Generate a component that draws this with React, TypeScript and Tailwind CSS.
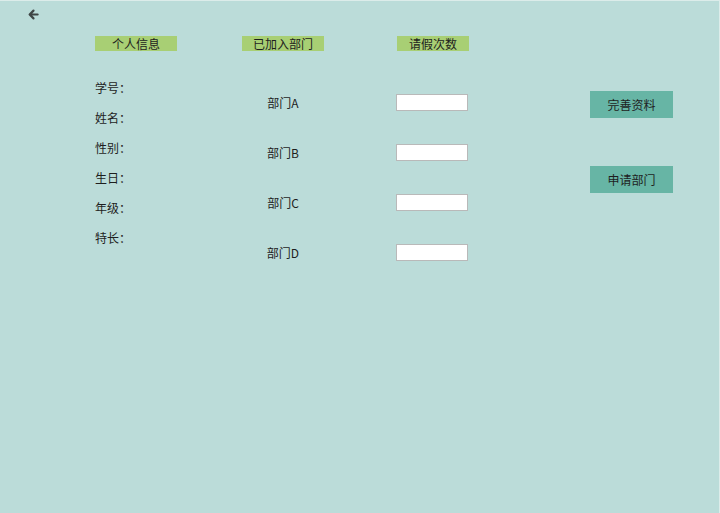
import React from 'react';

const labels = ['学号：', '姓名：', '性别：', '生日：', '年级：', '特长：'];
const depts = ['部门A', '部门B', '部门C', '部门D'];

function Header({ text, width }: { text: string; width: string }) {
  return (
    <div className={`h-[15px] ${width} bg-[#a8cf74] flex items-center justify-center text-[12px] leading-none text-[#1e1e1e]`}>
      {text}
    </div>
  );
}

function App() {
  return (
    <div
      className="h-[513px] w-[720px] bg-[#bbdcd9] border-t border-r border-[#dcecea] text-[#1e1e1e] relative"
      style={{ fontFamily: '"Noto Sans CJK SC", "Noto Sans", sans-serif' }}
    >
      <button className="absolute left-[27px] top-[7px] w-[12px] h-[12px] flex items-center justify-center">
        <svg width="11" height="11" viewBox="0 0 12 12" fill="none" stroke="#3f4545" strokeWidth="2.4" strokeLinecap="round" strokeLinejoin="round">
          <path d="M10.5 6H2M6 1.8L1.8 6L6 10.2" />
        </svg>
      </button>

      <div className="flex pl-[95px] pt-[35px]">
        {/* personal info */}
        <div className="w-[147px]">
          <Header text="个人信息" width="w-[82px]" />
          <div className="mt-[22px] flex flex-col">
            {labels.map((l) => (
              <div key={l} className="h-[30px] flex items-center text-[12px]">
                {l}
              </div>
            ))}
          </div>
        </div>

        {/* departments */}
        <div className="w-[155px]">
          <Header text="已加入部门" width="w-[82px]" />
          <div className="mt-[27px] w-[82px] flex flex-col">
            {depts.map((d) => (
              <div key={d} className="h-[50px] flex items-center justify-center text-[12px]">
                {d}
              </div>
            ))}
          </div>
        </div>

        {/* leave count */}
        <div className="w-[193px]">
          <Header text="请假次数" width="w-[72px]" />
          <div className="mt-[26px] -ml-px flex flex-col">
            {depts.map((d) => (
              <div key={d} className="h-[50px] flex items-center">
                <input
                  type="text"
                  className="w-[72px] h-[17px] bg-white border border-[#b9b9b9] outline-none"
                />
              </div>
            ))}
          </div>
        </div>

        {/* actions */}
        <div className="pt-[55px] flex flex-col gap-[48px]">
          <button className="w-[83px] h-[27px] bg-[#67b5a5] text-[12px] text-[#1e1e1e]">完善资料</button>
          <button className="w-[83px] h-[27px] bg-[#67b5a5] text-[12px] text-[#1e1e1e]">申请部门</button>
        </div>
      </div>
    </div>
  );
}

export default App;
